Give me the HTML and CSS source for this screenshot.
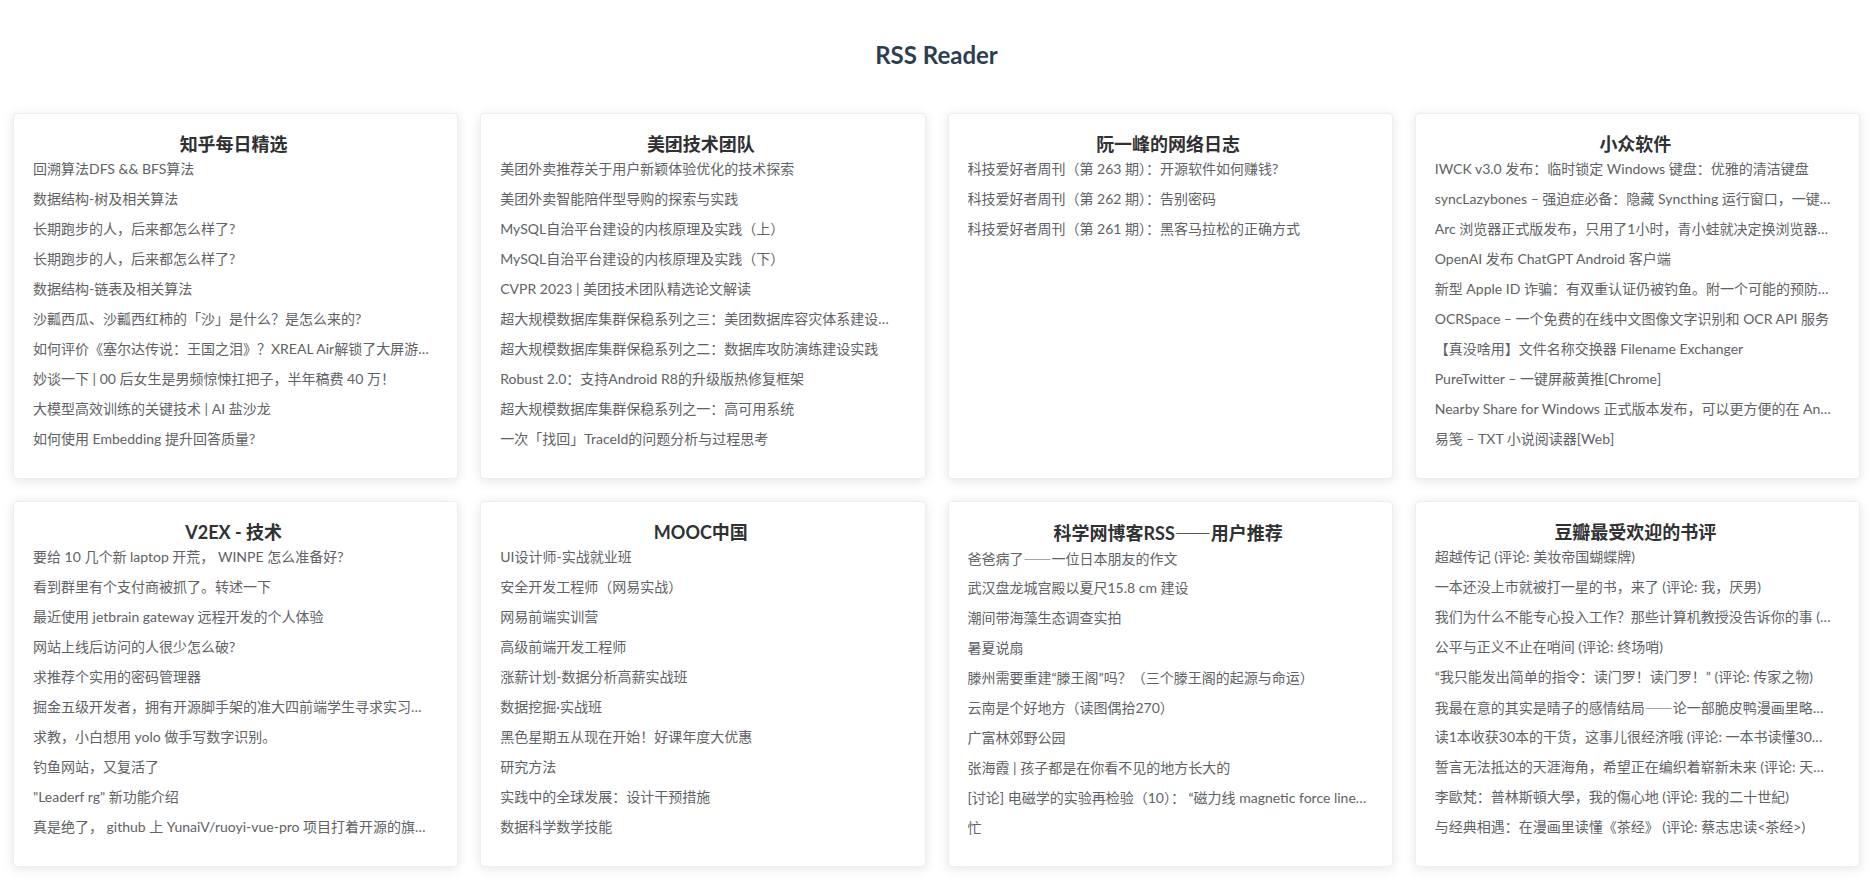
FILE: index.html
```html
<!DOCTYPE html>
<html lang="zh-CN">
<head>
<meta charset="utf-8">
<title>RSS Reader</title>
<link rel="stylesheet" href="styles.css">
</head>
<body>
<div class="app">
  <h1 class="page-title">RSS Reader</h1>
  <div class="feed-grid">
    <section class="card">
      <h3 class="card-title">知乎每日精选</h3>
      <ul class="items">
        <li>回溯算法DFS &amp;&amp; BFS算法</li>
        <li>数据结构-树及相关算法</li>
        <li>长期跑步的人，后来都怎么样了?</li>
        <li>长期跑步的人，后来都怎么样了?</li>
        <li>数据结构-链表及相关算法</li>
        <li>沙瓤西瓜、沙瓤西红柿的「沙」是什么？是怎么来的?</li>
        <li>如何评价《塞尔达传说：王国之泪》？XREAL Air解锁了大屏游戏新体验吗？</li>
        <li>妙谈一下 | 00 后女生是男频惊悚扛把子，半年稿费 40 万！</li>
        <li>大模型高效训练的关键技术 | AI 盐沙龙</li>
        <li>如何使用 Embedding 提升回答质量?</li>
      </ul>
    </section>
    <section class="card">
      <h3 class="card-title">美团技术团队</h3>
      <ul class="items">
        <li>美团外卖推荐关于用户新颖体验优化的技术探索</li>
        <li>美团外卖智能陪伴型导购的探索与实践</li>
        <li>MySQL自治平台建设的内核原理及实践（上）</li>
        <li>MySQL自治平台建设的内核原理及实践（下）</li>
        <li>CVPR 2023 | 美团技术团队精选论文解读</li>
        <li>超大规模数据库集群保稳系列之三：美团数据库容灾体系建设实践</li>
        <li>超大规模数据库集群保稳系列之二：数据库攻防演练建设实践</li>
        <li>Robust 2.0：支持Android R8的升级版热修复框架</li>
        <li>超大规模数据库集群保稳系列之一：高可用系统</li>
        <li>一次「找回」TraceId的问题分析与过程思考</li>
      </ul>
    </section>
    <section class="card">
      <h3 class="card-title">阮一峰的网络日志</h3>
      <ul class="items">
        <li>科技爱好者周刊（第 263 期）：开源软件如何赚钱?</li>
        <li>科技爱好者周刊（第 262 期）：告别密码</li>
        <li>科技爱好者周刊（第 261 期）：黑客马拉松的正确方式</li>
      </ul>
    </section>
    <section class="card">
      <h3 class="card-title">小众软件</h3>
      <ul class="items">
        <li>IWCK v3.0 发布：临时锁定 Windows 键盘：优雅的清洁键盘</li>
        <li>syncLazybones – 强迫症必备：隐藏 Syncthing 运行窗口，一键启动/关闭</li>
        <li>Arc 浏览器正式版发布，只用了1小时，青小蛙就决定换浏览器了[Windows]</li>
        <li>OpenAI 发布 ChatGPT Android 客户端</li>
        <li>新型 Apple ID 诈骗：有双重认证仍被钓鱼。附一个可能的预防方法</li>
        <li>OCRSpace – 一个免费的在线中文图像文字识别和 OCR API 服务</li>
        <li>【真没啥用】文件名称交换器 Filename Exchanger</li>
        <li>PureTwitter – 一键屏蔽黄推[Chrome]</li>
        <li>Nearby Share for Windows 正式版本发布，可以更方便的在 Android 与 Windows 之间传文件了</li>
        <li>易笺 – TXT 小说阅读器[Web]</li>
      </ul>
    </section>
    <section class="card">
      <h3 class="card-title">V2EX - 技术</h3>
      <ul class="items">
        <li>要给 10 几个新 laptop 开荒， WINPE 怎么准备好?</li>
        <li>看到群里有个支付商被抓了。转述一下</li>
        <li>最近使用 jetbrain gateway 远程开发的个人体验</li>
        <li>网站上线后访问的人很少怎么破?</li>
        <li>求推荐个实用的密码管理器</li>
        <li>掘金五级开发者，拥有开源脚手架的准大四前端学生寻求实习机会</li>
        <li>求教，小白想用 yolo 做手写数字识别。</li>
        <li>钓鱼网站，又复活了</li>
        <li>"Leaderf rg" 新功能介绍</li>
        <li>真是绝了， github 上 YunaiV/ruoyi-vue-pro 项目打着开源的旗号收费</li>
      </ul>
    </section>
    <section class="card">
      <h3 class="card-title">MOOC中国</h3>
      <ul class="items">
        <li>UI设计师-实战就业班</li>
        <li>安全开发工程师（网易实战）</li>
        <li>网易前端实训营</li>
        <li>高级前端开发工程师</li>
        <li>涨薪计划-数据分析高薪实战班</li>
        <li>数据挖掘·实战班</li>
        <li>黑色星期五从现在开始！好课年度大优惠</li>
        <li>研究方法</li>
        <li>实践中的全球发展：设计干预措施</li>
        <li>数据科学数学技能</li>
      </ul>
    </section>
    <section class="card">
      <h3 class="card-title">科学网博客RSS<span class="cjk">——</span>用户推荐</h3>
      <ul class="items">
        <li>爸爸病了<span class="cjk">——</span>一位日本朋友的作文</li>
        <li>武汉盘龙城宫殿以夏尺15.8 cm 建设</li>
        <li>潮间带海藻生态调查实拍</li>
        <li>暑夏说扇</li>
        <li>滕州需要重建“滕王阁”吗？（三个滕王阁的起源与命运）</li>
        <li>云南是个好地方（读图偶拾270）</li>
        <li>广富林郊野公园</li>
        <li>张海霞 | 孩子都是在你看不见的地方长大的</li>
        <li>[讨论] 电磁学的实验再检验（10）： “磁力线 magnetic force lines”的物理实在性</li>
        <li>忙</li>
      </ul>
    </section>
    <section class="card">
      <h3 class="card-title">豆瓣最受欢迎的书评</h3>
      <ul class="items">
        <li>超越传记 (评论: 美妆帝国蝴蝶牌)</li>
        <li>一本还没上市就被打一星的书，来了 (评论: 我，厌男)</li>
        <li>我们为什么不能专心投入工作？那些计算机教授没告诉你的事 (评论: 深度工作)</li>
        <li>公平与正义不止在哨间 (评论: 终场哨)</li>
        <li>“我只能发出简单的指令：读门罗！读门罗！” (评论: 传家之物)</li>
        <li>我最在意的其实是晴子的感情结局<span class="cjk">——</span>论一部脆皮鸭漫画里略显平淡的结尾 (评论: 灌篮高手)</li>
        <li>读1本收获30本的干货，这事儿很经济哦 (评论: 一本书读懂30部经典)</li>
        <li>誓言无法抵达的天涯海角，希望正在编织着崭新未来 (评论: 天涯海角)</li>
        <li>李歐梵：普林斯頓大學，我的傷心地 (评论: 我的二十世紀)</li>
        <li>与经典相遇：在漫画里读懂《茶经》 (评论: 蔡志忠读&lt;茶经&gt;)</li>
      </ul>
    </section>
  </div>
</div>
</body>
</html>
```

FILE: styles.css
```css
html, body {
  margin: 0;
  padding: 0;
  background: #ffffff;
}

body {
  font-family: "Lato", "Noto Sans CJK SC", "Noto Sans", sans-serif;
  -webkit-font-smoothing: antialiased;
}

.app {
  padding-bottom: 22px;
}

.page-title {
  margin: 0;
  padding-top: 40px;
  font-size: 24px;
  line-height: 30px;
  font-weight: 700;
  color: #2c3e50;
  text-align: center;
}

.feed-grid {
  display: grid;
  grid-template-columns: repeat(4, minmax(0, 1fr));
  gap: 22px;
  padding: 43px 13px 0;
}

.card {
  min-width: 0;
  height: 366px;
  box-sizing: border-box;
  background: #ffffff;
  border: 1px solid #ebeef5;
  border-radius: 4px;
  box-shadow: 0 2px 12px 0 rgba(0, 0, 0, 0.1);
  padding: 20px 23px 20px 19px;
  color: #303133;
}

.card-title {
  margin: 0;
  font-size: 18px;
  line-height: 20px;
  font-weight: 700;
  text-align: center;
  color: #303133;
}

.cjk {
  font-family: "Noto Sans CJK SC", sans-serif;
}

.items {
  list-style: none;
  margin: 0;
  padding: 0;
}

.items li {
  font-size: 14px;
  line-height: 30px;
  height: 30px;
  color: #606266;
  white-space: nowrap;
  overflow: hidden;
  text-overflow: ellipsis;
}
```
